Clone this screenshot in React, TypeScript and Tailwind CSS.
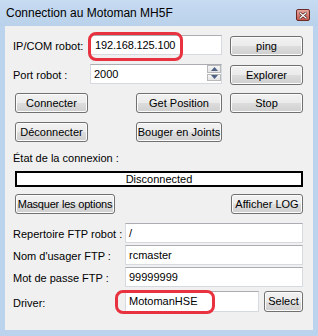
import React from 'react';

const font = { fontFamily: '"Liberation Sans", Arial, sans-serif' };

const Btn = ({ label, className = '' }: { label: string; className?: string }) => (
  <button
    className={
      'flex items-center justify-center h-[20px] px-0 whitespace-nowrap rounded-[3px] border border-[#707070] text-[11px] text-black leading-none ' +
      'bg-[linear-gradient(to_bottom,#f2f2f2_0%,#ebebeb_50%,#dddddd_50%,#cfcfcf_100%)] shadow-[inset_0_0_0_1px_#fcfcfc] ' +
      className
    }
  >
    {label}
  </button>
);

const Field = ({ value, className = '' }: { value: string; className?: string }) => (
  <div
    className={
      'flex items-center h-[20px] bg-white border border-[#d5d9e0] border-t-[#abadb3] pl-[3px] text-[11px] text-black ' +
      className
    }
  >
    {value}
  </div>
);

const Highlight = ({ className }: { className: string }) => (
  <div className={'absolute border-[3px] border-[#e8323f] rounded-[8px] pointer-events-none ' + className} />
);

const Spinner = () => (
  <div className="absolute right-[1px] top-[1px] flex flex-col w-[14px] h-[16px] gap-[1px]">
    {[0, 1].map((i) => (
      <div
        key={i}
        className="flex flex-1 items-center justify-center border border-[#b8b8b8] bg-[linear-gradient(to_bottom,#f6f6f6,#e4e4e4)]"
      >
        <svg width="7" height="4" viewBox="0 0 7 4">
          <path d={i === 0 ? 'M0 4 L3.5 0 L7 4 Z' : 'M0 0 L3.5 4 L7 0 Z'} fill="#4d6185" />
        </svg>
      </div>
    ))}
  </div>
);

export default function App() {
  return (
    <div className="w-[318px] h-[336px] bg-[#bcd3ed] flex flex-col" style={font}>
      {/* title bar */}
      <div className="h-[26px] flex items-center justify-between pl-[6px] pr-[8px] bg-[linear-gradient(to_bottom,#c7dbf2,#b9d1ea)]">
        <span className="text-[12px] text-black">Connection au Motoman MH5F</span>
        <div className="flex items-center justify-center w-[14px] h-[12px] mt-[4px] rounded-[2px] border border-[#6b2a26] bg-[linear-gradient(to_bottom,#e8a59c,#c7574b)]">
          <svg width="8" height="7" viewBox="0 0 8 7">
            <path d="M1 1 L7 6 M7 1 L1 6" stroke="#3b1512" strokeWidth="2.6" strokeLinecap="square" />
            <path d="M1 1 L7 6 M7 1 L1 6" stroke="#ffffff" strokeWidth="1.3" strokeLinecap="square" />
          </svg>
        </div>
      </div>

      {/* client area */}
      <div className="mx-[5px] h-[304px] bg-[#f0f0f0] flex flex-col text-[11px] text-black">
        {/* IP row */}
        <div className="flex items-center mt-[9px] h-[20px]">
          <span className="w-[85px] pl-[8px] pt-[2px]">IP/COM robot:</span>
          <div className="relative">
            <Field value="192.168.125.100" className="w-[132px] pl-[4px] tracking-[-0.15px]" />
            <Highlight className="left-[-2px] top-[-3px] w-[95px] h-[29px]" />
          </div>
          <Btn label="ping" className="ml-[8px] mt-[2px] w-[73px]" />
        </div>

        {/* Port row */}
        <div className="flex items-center mt-[9px] h-[20px]">
          <span className="w-[85px] pl-[8px] pt-[2px]">Port robot :</span>
          <div className="relative">
            <Field value="2000" className="w-[132px]" />
            <Spinner />
          </div>
          <Btn label="Explorer" className="ml-[8px] mt-[2px] w-[73px]" />
        </div>

        {/* Connect row */}
        <div className="flex items-center mt-[9px] h-[20px]">
          <Btn label="Connecter" className="ml-[10px] w-[73px]" />
          <Btn label="Get Position" className="ml-[48px] w-[86px]" />
          <Btn label="Stop" className="ml-[8px] w-[73px]" />
        </div>

        {/* Disconnect row */}
        <div className="flex items-center mt-[9px] h-[20px]">
          <Btn label="Déconnecter" className="ml-[10px] w-[73px]" />
          <Btn label="Bouger en Joints" className="ml-[48px] w-[86px]" />
        </div>

        <div className="mt-[9px] pl-[8px] h-[14px] leading-[14px]">État de la connexion :</div>

        <div className="ml-[10px] mt-[6px] w-[288px] h-[16px] border-2 border-black bg-white flex items-center justify-center leading-none">
          Disconnected
        </div>

        <div className="flex items-center mt-[7px] h-[20px]">
          <Btn label="Masquer les options" className="ml-[10px] w-[100px] tracking-[-0.2px]" />
          <Btn label="Afficher LOG" className="ml-[116px] w-[72px]" />
        </div>

        {/* FTP fields */}
        <div className="flex items-center mt-[9px] h-[20px]">
          <span className="w-[120px] pl-[8px] pt-[3px]">Repertoire FTP robot :</span>
          <Field value="/" className="w-[178px]" />
        </div>
        <div className="flex items-center mt-[2px] h-[20px]">
          <span className="w-[120px] pl-[8px] pt-[3px]">Nom d'usager FTP :</span>
          <Field value="rcmaster" className="w-[178px]" />
        </div>
        <div className="flex items-center mt-[2px] h-[20px]">
          <span className="w-[120px] pl-[8px] pt-[3px]">Mot de passe FTP :</span>
          <Field value="99999999" className="w-[178px]" />
        </div>
        <div className="flex items-center mt-[4px] h-[21px]">
          <span className="w-[120px] pl-[8px] pt-[3px]">Driver:</span>
          <div className="relative">
            <Field value="MotomanHSE" className="w-[134px] h-[21px]" />
            <Highlight className="left-[-10px] top-[-1px] w-[100px] h-[24px]" />
          </div>
          <Btn label="Select" className="ml-[5px] w-[39px] h-[21px]" />
        </div>
      </div>
    </div>
  );
}
